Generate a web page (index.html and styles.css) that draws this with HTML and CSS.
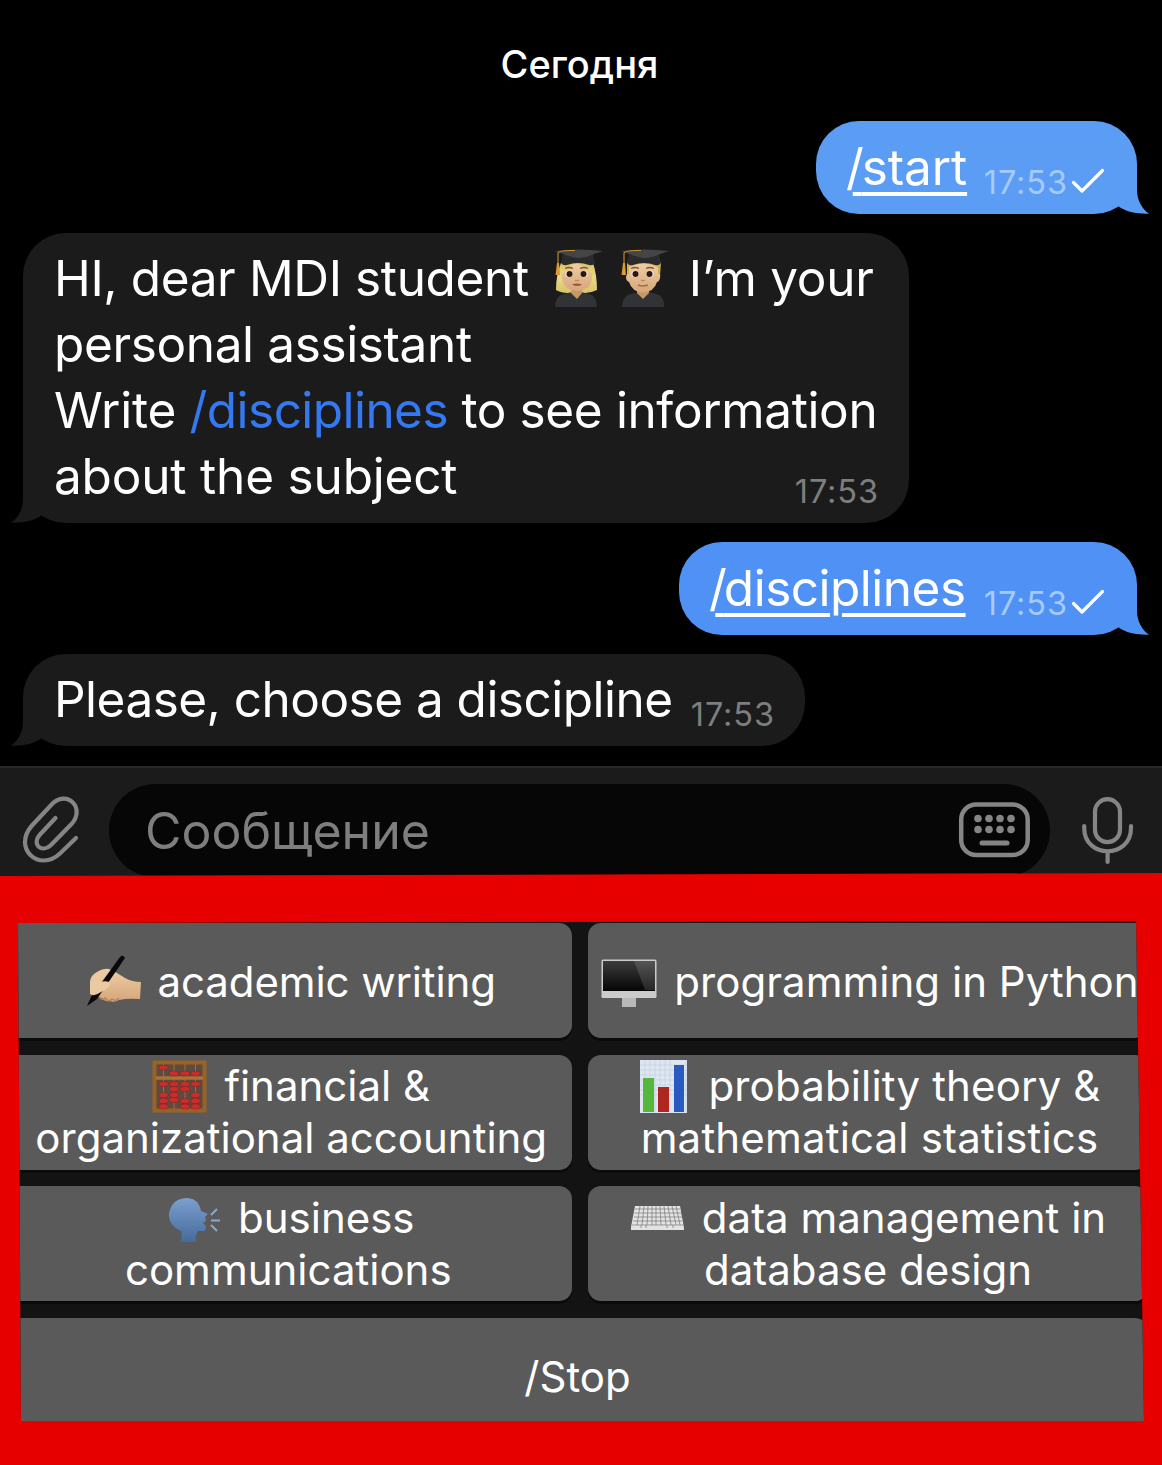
FILE: index.html
```html
<!DOCTYPE html>
<html lang="ru">
<head>
<meta charset="utf-8">
<title>Chat</title>
<link rel="stylesheet" href="styles.css">
</head>
<body>
<svg class="defs" width="0" height="0" aria-hidden="true">
  <defs>
    <symbol id="tail" viewBox="0 0 55 50"><path d="M42 0V26C42 36 47 45 54 49.7C42 50 31 48 23 42L30 20V0Z" fill="currentColor"/></symbol>
    <symbol id="check" viewBox="0 0 34 26"><path d="M2.500 14.500L11 23L31.500 2.500" fill="none" stroke="#fff" stroke-width="3.200" stroke-linecap="round" stroke-linejoin="round"/></symbol>
    <linearGradient id="skin" x1="0" y1="0" x2="0" y2="1"><stop offset="0" stop-color="#efcda4"/><stop offset="1" stop-color="#d6a67a"/></linearGradient>
    <linearGradient id="hair" x1="0" y1="0" x2="0" y2="1"><stop offset="0" stop-color="#d9bf5e"/><stop offset=".5" stop-color="#ead985"/><stop offset="1" stop-color="#d8c36b"/></linearGradient>
    <linearGradient id="screen" x1="0" y1="0" x2="0" y2="1"><stop offset="0" stop-color="#3c3c3c"/><stop offset="1" stop-color="#050505"/></linearGradient>
    <linearGradient id="blue" x1="0" y1="0" x2="0" y2="1"><stop offset="0" stop-color="#7ba0cf"/><stop offset="1" stop-color="#466a9b"/></linearGradient>
    <symbol id="cap" viewBox="0 0 48 59">
      <path d="M8 5L6 14Q8 17 12 16Q23 12 34 16Q38 17 40 14L38 5Z" fill="#2b2b2d"/>
      <path d="M0 2Q24 -1 48 2L39 5Q31 9 23 9Q15 8 0 2Z" fill="#454547"/>
      <path d="M20 1.500Q4 1 3 4V15" fill="none" stroke="#c9922f" stroke-width="1.100"/>
      <path d="M2 14H4L5 26H.500Z" fill="#dc9a30"/>
    </symbol>
    <symbol id="eyes" viewBox="0 0 48 59">
      <ellipse cx="14" cy="25" rx="3.600" ry="3.200" fill="#f8efe8"/><ellipse cx="29" cy="25" rx="3.600" ry="3.200" fill="#f8efe8"/>
      <circle cx="14.500" cy="25" r="3" fill="#2c1810"/><circle cx="28.500" cy="25" r="3" fill="#2c1810"/>
      <path d="M10 19.500Q14 17.500 18 19.500M25 19.500Q29 17.500 33 19.500" fill="none" stroke="#7b5631" stroke-width="1.300"/>
      <path d="M20 31Q22 32.500 24 31" fill="none" stroke="#bb8759" stroke-width="1.200"/>
    </symbol>
  </defs>
</svg>

<main class="screen">
  <div class="day">Сегодня</div>

  <section class="chat">
    <article class="bubble out first">
      <span class="command"><span class="slash">/</span><u>start</u></span>
      <span class="time">17:53</span>
      <svg class="check"><use href="#check"/></svg>
      <svg class="tail"><use href="#tail"/></svg>
    </article>

    <article class="bubble in long">
      <p class="line"><span class="t-hi">HI, dear MDI student</span>
        <svg class="student woman" viewBox="0 0 48 59">
          <path d="M6 14Q22 8 38 14Q42 26 42 41Q36 44 30 44H13Q6 44 1 41Q1 26 6 14Z" fill="url(#hair)"/>
          <path d="M0 58Q0 47 9 45L17 43H26L34 45Q42 47 42 58Z" fill="#323336"/>
          <path d="M17 36H27V44L22 50L16 44Z" fill="#c89767"/>
          <path d="M7 25Q15 20 19 14Q27 15 37 25Q38 35 32 39Q22 45 12 39Q6 34 7 25Z" fill="url(#skin)"/>
          <use href="#eyes"/><path d="M17 35.500Q22 33.500 27 35.500Q22 38.500 17 35.500Z" fill="#9c5648"/><use href="#cap"/>
        </svg>
        <svg class="student man" viewBox="0 0 48 59">
          <path d="M6 13Q23 6 40 13L39 27H6Z" fill="#cbb24c"/>
          <path d="M1 58Q1 47 10 45L18 43H28L35 45Q44 47 43 58Z" fill="#323336"/>
          <path d="M16 37H28V44L22 50L16 44Z" fill="#c89767"/>
          <path d="M8 18Q22 11 37 18V25Q40 24 39 29Q38 33 36 33Q33 43 22 43.500Q11 43 8 33Q5 32 5 28Q6 23 8 25Z" fill="url(#skin)"/>
          <use href="#eyes"/><path d="M17 36Q22 38 27 36" fill="none" stroke="#a56a48" stroke-width="1.500"/><use href="#cap"/>
        </svg>
        <span class="t-im">I’m your</span></p>
      <p class="line"><span class="t-hi">personal assistant</span></p>
      <p class="line"><span class="t-write"><span class="t-about">Write</span> <a class="link">/disciplines</a> <span class="t-hi">to see information</span></span></p>
      <p class="line"><span class="t-about">about the subject</span><span class="time end">17:53</span></p>
      <svg class="tail"><use href="#tail"/></svg>
    </article>

    <article class="bubble out second">
      <span class="command"><span class="slash">/</span><u>disciplines</u></span>
      <span class="time">17:53</span>
      <svg class="check"><use href="#check"/></svg>
      <svg class="tail"><use href="#tail"/></svg>
    </article>

    <article class="bubble in short">
      <span class="t-please">Please, choose a discipline</span>
      <span class="time">17:53</span>
      <svg class="tail"><use href="#tail"/></svg>
    </article>
  </section>

  <footer class="composer">
    <svg class="clip" viewBox="0 0 60 68"><path d="M33.500 22L18 38.500C9 48 20 58 29 49L50 27.500C63 12 46 -6 31 7L10 29.500C-10 52 17 77 38 57.500L54 42" fill="none" stroke="#858585" stroke-width="4.200" stroke-linecap="round"/></svg>
    <div class="field">
      <span class="placeholder">Сообщение</span>
      <svg class="kbd" viewBox="0 0 72 56"><rect x="2.200" y="2.500" width="66.500" height="50.500" rx="15" fill="none" stroke="#858585" stroke-width="4.500"/><g fill="#858585"><circle cx="19" cy="16.500" r="3.800"/><circle cx="30" cy="16.500" r="3.800"/><circle cx="41" cy="16.500" r="3.800"/><circle cx="52" cy="16.500" r="3.800"/><circle cx="19" cy="27.500" r="3.800"/><circle cx="30" cy="27.500" r="3.800"/><circle cx="41" cy="27.500" r="3.800"/><circle cx="52" cy="27.500" r="3.800"/><rect x="20.500" y="38.500" width="30" height="5" rx="2.500"/></g></svg>
    </div>
    <svg class="mic" viewBox="0 0 52 68"><g fill="none" stroke="#858585" stroke-width="4.200" stroke-linecap="round"><rect x="13" y="2.200" width="25" height="43" rx="12.500"/><path d="M2.200 29V31C2.200 62 49 62 49 31V29M25.600 55V65"/></g></svg>
  </footer>

  <section class="keyboard">
    <div class="keys">
      <button class="key"><span class="row k1">
        <svg width="55" height="52" viewBox="0 0 55 52"><path d="M3 38V26Q4 20 10 17Q17 13 22 14Q31 18 38 23Q45 27 54 27L53 44Q40 43 32 45Q27 48 23 46Q18 47 15 43L9 41Z" fill="url(#skin)"/><path d="M12 42Q16 46 18 43Q22 48 25 44Q29 47 32 43" fill="none" stroke="#b98659" stroke-width="1.500"/><path d="M33 2Q36 -1 38 3L10 44L0 51L4 42Z" fill="#090909"/><path d="M3 39Q2 24 8 19L16 16L17 22L13 27Q20 25 24 28Q22 33 14 37Q7 42 3 39Z" fill="#eccaa1"/></svg>
        <span>academic writing</span></span></button>
      <button class="key"><span class="row k2">
        <svg width="56" height="49" viewBox="0 0 56 49"><rect x="21" y="38" width="14" height="10" fill="#b8b8b8"/><rect x=".500" y=".500" width="55" height="38.500" rx="1.500" fill="#cbcbcb"/><rect x="2" y="2" width="52" height="30" fill="url(#screen)"/><path d="M33 2H54V31H44Z" fill="#fff" opacity=".13"/></svg>
        <span>programming in Python</span></span></button>
      <button class="key two"><span class="row">
        <svg width="55" height="53" viewBox="0 0 55 53"><rect x="2.500" y="2.500" width="50" height="48" fill="#5d4b40" stroke="#9b6227" stroke-width="4"/><path d="M11.500 4V49M22 4V49M33 4V49M43.500 4V49" stroke="#a66b34"/><path d="M4 18H51" stroke="#ac7133" stroke-width="3.500"/><g fill="#c92d29" stroke="#821a18" stroke-width=".4"><ellipse cx="11.500" cy="7.500" rx="4.800" ry="2.600"/><ellipse cx="22" cy="13.500" rx="4.800" ry="2.600"/><ellipse cx="33" cy="13.500" rx="4.800" ry="2.600"/><ellipse cx="43.500" cy="13.500" rx="4.800" ry="2.600"/><ellipse cx="11.500" cy="24" rx="4.800" ry="2.600"/><ellipse cx="22" cy="24" rx="4.800" ry="2.600"/><ellipse cx="33" cy="24" rx="4.800" ry="2.600"/><ellipse cx="43.500" cy="24" rx="4.800" ry="2.600"/><ellipse cx="22" cy="29" rx="4.800" ry="2.600"/><ellipse cx="33" cy="29" rx="4.800" ry="2.600"/><ellipse cx="22" cy="35" rx="4.800" ry="2.600"/><ellipse cx="11.500" cy="35" rx="4.800" ry="2.600"/><ellipse cx="43.500" cy="35" rx="4.800" ry="2.600"/><ellipse cx="11.500" cy="41" rx="4.800" ry="2.600"/><ellipse cx="22" cy="40" rx="4.800" ry="2.600"/><ellipse cx="33" cy="41" rx="4.800" ry="2.600"/><ellipse cx="43.500" cy="41" rx="4.800" ry="2.600"/><ellipse cx="11.500" cy="46.500" rx="4.800" ry="2.600"/><ellipse cx="33" cy="46.500" rx="4.800" ry="2.600"/><ellipse cx="43.500" cy="46.500" rx="4.800" ry="2.600"/></g></svg>
        <span>financial &amp;</span></span><span class="row">organizational accounting</span></button>
      <button class="key two"><span class="row k5">
        <svg width="48" height="53" viewBox="0 0 48 53"><rect width="47" height="53" fill="#dfe6f0"/><path d="M0 5H47M0 10H47M0 15H47M0 20H47M0 25H47M0 30H47M0 35H47M5 0V53M10 0V53M15 0V53M20 0V53M25 0V53M30 0V53M46 0V53" stroke="#bfd0e2" stroke-width=".7"/><path d="M3 18H14V52H3Z" fill="#55b83c"/><path d="M18 27H29V52H18Z" fill="#ae261d"/><path d="M34 5H44V52H34Z" fill="#285ac0"/></svg>
        <span>probability theory &amp;</span></span><span class="row k6">mathematical statistics</span></button>
      <button class="key two"><span class="row k7">
        <svg width="53" height="46" viewBox="0 0 53 46"><path d="M12 45Q15 39 13 34Q0 28 1 16Q4 1 20 1Q31 2 33 14L40 17L37 20L38 24L35 26L38 29L37 34H30Q27 38 28 45Z" fill="url(#blue)"/><path d="M43 18L49 12M43 23.500H52M43 28L49 34" stroke="#87a9d2" stroke-width="2"/></svg>
        <span>business</span></span><span class="row k8">communications</span></button>
      <button class="key two"><span class="row">
        <svg width="55" height="26" viewBox="0 0 55 26"><path d="M5 1H50L54 23V25H1V22Z" fill="#e3e3e3"/><path d="M5 4H50M4.500 8H51M4 12H52M3 16H52M2 20H53M10 1L7 20M14 1L12 20M18 1L17 20M22 1V20M26 1V20M30 1L31 20M34 1L36 20M38 1L41 20M42 1L46 20M46 1L50 20M11 20V23M16 20V23M37 20V23M43 20V23" stroke="#777" stroke-width=".7"/></svg>
        <span>data management in</span></span><span class="row">database design</span></button>
      <button class="key wide"><span class="row">/Stop</span></button>
    </div>
  </section>
</main>
</body>
</html>
```
FILE: styles.css
```css
* { box-sizing: border-box; }
body { margin: 0; background: #000; color: #fff; font-family: Inter, "Noto Sans", sans-serif; }
p { margin: 0; }
svg { display: block; flex: none; overflow: visible; }
.defs { position: absolute; }
.screen { width: 1162px; height: 1465px; overflow: hidden; display: flex; flex-direction: column; }
.day { height: 121px; padding-top: 39px; text-align: center; font-size: 38px; line-height: 50px; font-weight: 500; padding-right: 3px; }
.chat { display: flex; flex-direction: column; gap: 19px; padding: 0 25px 0 23px; height: 645px; flex: none; }
.bubble { position: relative; border-radius: 43px; font-size: 49.5px; line-height: 66px; white-space: nowrap; flex: none; }
.out { align-self: flex-end; height: 93px; display: flex; padding: 13px 32px 0 30px; }
.in { align-self: flex-start; background: #1b1b1b; color: #fff; }
.first { width: 321px; background: #5b9cf4; color: #5b9cf4; }
.second { width: 458px; background: #4f91f4; color: #4f91f4; }
.long { width: 886px; height: 290px; padding: 12px 31px 0; }
.short { width: 782px; height: 92px; padding: 12px 30px 0 31px; display: flex; justify-content: space-between; }
.line { display: flex; height: 66px; }
.command { color: #fff; flex: 1; letter-spacing: -.5px; }
.first .command { letter-spacing: -.1px; }
.command u { text-decoration-thickness: 4px; text-underline-offset: 6.5px; }
/* the underline reaches back below the slash */
.command u::before { content: "\2009"; }
.slash { margin-right: -11px; }
.time { font-size: 32.5px; line-height: 97px; height: 66px; letter-spacing: .9px; color: #7e7e7e; }
.in .time { line-height: 98px; }
.out .time { color: #a5cbfa; }
.in .end { margin-left: auto; margin-right: -1px; line-height: 97px; }
.check { width: 34px; height: 26px; margin: 34px 0 0 3px; }
.tail { position: absolute; width: 55px; height: 50px; bottom: 0; right: -13px; }
.in .tail { right: auto; left: -13px; transform: scaleX(-1); color: #1b1b1b; }
.link { color: #3478f2; }
.t-hi { letter-spacing: -.37px; }
.t-im { letter-spacing: -.25px; }
.t-write { letter-spacing: -.55px; }
.t-about { letter-spacing: -.18px; }
.t-please { letter-spacing: -.52px; }
.student { width: 48px; height: 59px; margin-top: 4px; }
.woman { margin-left: 26px; }
.man { margin: 4px 20px 0 18px; }
.composer { height: 110px; flex: none; background: #1b1b1b; border-top: 2px solid #282828; display: flex; padding: 16px 28px 0 22px; }
.clip { width: 60px; height: 68px; margin-top: 12px; }
.field { width: 942px; height: 93px; margin-left: 27px; border-radius: 47px; background: #060606; padding: 17px 19px 0 36px; display: flex; justify-content: space-between; }
.placeholder { color: #7e7e7e; font-size: 50px; line-height: 60px; }
.kbd { width: 72px; height: 56px; margin-top: 1px; }
.mic { width: 52px; height: 68px; margin: 13px 0 0 32px; }
.keyboard { position: relative; height: 592px; margin-top: -3px; flex: none; background: #e60000; padding: 48px 14px 0 11px; clip-path: polygon(0 3px, 100% 0, 100% 100%, 0 100%); }
.keys { height: 500px; background: #131313; padding-top: 2px; display: grid; grid-template-columns: 560.5px 560px; column-gap: 16.5px; row-gap: 16.5px; grid-auto-rows: 115px; clip-path: polygon(7px 2px, 1125px 0, 1133px 500px, 10px 500px); }
.key { border: 0; border-radius: 13px; background: #5a5a5a; box-shadow: 0 3px #0b0b0b; color: #fff; font: 42px/52px Inter, "Noto Sans", sans-serif; padding: 3px 0 0; display: flex; flex-direction: column; justify-content: center; align-items: center; white-space: nowrap; }
.key:nth-child(odd) { border-radius: 8px 13px 13px 8px; }
.key.two { padding: 0; }
.row { display: flex; gap: 17px; height: 52px; align-items: center; justify-content: center; }
.k1 { gap: 16px; letter-spacing: -.1px; }
.k1 svg { margin-bottom: 2px; }
.k2 { padding-left: 4px; letter-spacing: .03px; }
.k2 svg { margin-top: 3px; }
.k5 { gap: 20px; letter-spacing: .15px; padding-left: 5px; }
.k6 { letter-spacing: .18px; padding-left: 3px; }
.k7 svg { margin-top: 5px; }
.k8 { padding-right: 6px; }
.wide { grid-column: 1 / -1; padding: 3px 4px 0 0; }
```
